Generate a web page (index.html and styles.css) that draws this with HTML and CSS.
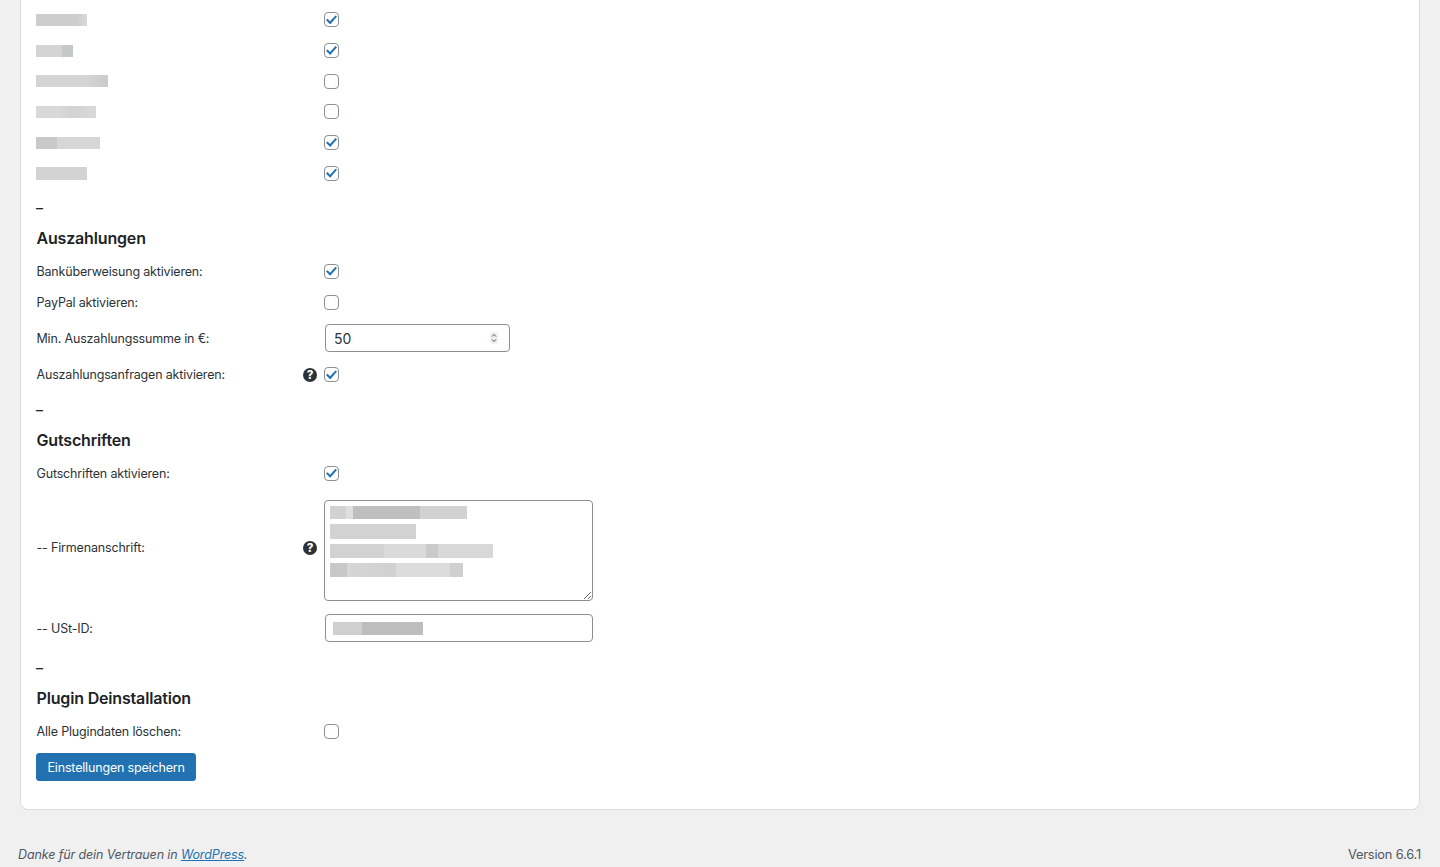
FILE: index.html
```html
<!DOCTYPE html>
<html lang="de">
<head>
    <meta charset="UTF-8">
    <title>Einstellungen</title>
    <link rel="stylesheet" href="styles.css">
</head>
<body>
    <form class="card">
        <div class="row"><div class="label"><span class="blur blur-a"></span></div><input type="checkbox" class="check" checked></div>
        <div class="row"><div class="label"><span class="blur blur-b"></span></div><input type="checkbox" class="check" checked></div>
        <div class="row"><div class="label"><span class="blur blur-c"></span></div><input type="checkbox" class="check"></div>
        <div class="row"><div class="label"><span class="blur blur-d"></span></div><input type="checkbox" class="check"></div>
        <div class="row"><div class="label"><span class="blur blur-e"></span></div><input type="checkbox" class="check" checked></div>
        <div class="row"><div class="label"><span class="blur blur-f"></span></div><input type="checkbox" class="check" checked></div>

        <p class="dash">–</p>
        <h2>Auszahlungen</h2>
        <div class="row"><label class="label">Banküberweisung aktivieren:</label><input type="checkbox" class="check" checked></div>
        <div class="row"><label class="label">PayPal aktivieren:</label><input type="checkbox" class="check"></div>
        <div class="row row-number">
            <label class="label">Min. Auszahlungssumme in €:</label>
            <div class="number-wrap">
                <input type="text" class="field field-number" value="50">
                <svg class="spinner" width="8" height="12" viewBox="0 0 8 12"><path d="M2 4.6 4 2.4 6 4.6M2 7.4 4 9.6 6 7.4" fill="none" stroke="#50575e" stroke-width="1"/></svg>
            </div>
        </div>
        <div class="row row-help"><label class="label">Auszahlungsanfragen aktivieren:<span class="help">?</span></label><input type="checkbox" class="check" checked></div>

        <p class="dash">–</p>
        <h2>Gutschriften</h2>
        <div class="row"><label class="label">Gutschriften aktivieren:</label><input type="checkbox" class="check" checked></div>
        <div class="row row-area">
            <label class="label">-- Firmenanschrift:<span class="help">?</span></label>
            <div class="area-wrap">
                <textarea class="area"></textarea>
                <div class="area-lines">
                    <span class="blur line-a"></span>
                    <span class="blur line-b"></span>
                    <span class="blur line-c"></span>
                    <span class="blur line-d"></span>
                </div>
            </div>
        </div>
        <div class="row row-field">
            <label class="label">-- USt-ID:</label>
            <div class="text-wrap">
                <input type="text" class="field field-text">
                <span class="blur line-e"></span>
            </div>
        </div>

        <p class="dash">–</p>
        <h2>Plugin Deinstallation</h2>
        <div class="row"><label class="label">Alle Plugindaten löschen:</label><input type="checkbox" class="check"></div>
        <button type="button" class="save">Einstellungen speichern</button>
    </form>

    <footer class="footer">
        <span class="thanks">Danke für dein Vertrauen in <a href="#">WordPress</a>.</span>
        <span class="version">Version 6.6.1</span>
    </footer>
</body>
</html>
```

FILE: styles.css
```css
html, body {
    margin: 0;
    height: 867px;
    overflow: hidden;
}

body {
    background: #f0f0f1;
    color: #2c3338;
    font-family: Inter, "Noto Sans", sans-serif;
    font-size: 12.5px;
    letter-spacing: -0.17px;
    line-height: 18px;
}

/* Einstellungen */
.card {
    box-sizing: border-box;
    height: 810px;
    margin: 0 20px;
    padding: 4.6px 15px 0;
    background: #fff;
    border: 1px solid #dcdcde;
    border-top: 0;
    border-radius: 0 0 8px 8px;
}

.row {
    display: flex;
    align-items: center;
    height: 30.67px;
}

.row-field {
    height: 41px;
}

.row-number {
    height: 42px;
}

.row-help {
    height: 31.17px;
}

.row-area {
    align-items: flex-start;
    height: 119px;
    padding-top: 11.7px;
    box-sizing: border-box;
}

.row-area .label {
    height: 95px;
}

.label {
    display: flex;
    align-items: center;
    justify-content: space-between;
    box-sizing: border-box;
    width: 288px;
    padding-right: 7px;
    flex-shrink: 0;
}

label.label {
    padding-left: 0.5px;
    padding-top: 2px;
}

.row-help label.label, .row-area label.label {
    padding-top: 0;
}

.dash {
    margin: 0;
    padding-top: 10.5px;
    height: 19.5px;
    font-size: 14px;
    font-weight: 500;
    line-height: 18px;
    color: #1d2327;
}

h2 {
    margin: 0;
    padding-top: 7.5px;
    padding-left: 0.5px;
    height: 30px;
    font-size: 16px;
    font-weight: 600;
    letter-spacing: -0.17px;
    line-height: 24px;
    color: #1d2327;
}

.check {
    appearance: none;
    display: flex;
    align-items: center;
    justify-content: center;
    box-sizing: border-box;
    width: 15px;
    height: 15px;
    margin: 0;
    background: #fff;
    border: 1px solid #8c8f94;
    border-radius: 4px;
}

.check:checked::before {
    content: "";
    width: 11px;
    height: 9px;
    background: #2271b1;
    clip-path: polygon(0 52%, 14% 38%, 37% 66%, 86% 0, 100% 12%, 38% 100%);
}

.help {
    display: block;
    width: 14px;
    height: 14px;
    border-radius: 50%;
    background: #2c3338;
    color: #fff;
    font-size: 11.5px;
    font-weight: 800;
    letter-spacing: 0;
    line-height: 14px;
    text-align: center;
}

/* Eingabefelder */
.field {
    box-sizing: border-box;
    height: 28px;
    margin: 0;
    padding: 0 8px;
    background: #fff;
    border: 1px solid #8c8f94;
    border-radius: 4px;
    color: #2c3338;
    font: inherit;
    font-size: 14px;
    letter-spacing: 0;
}

.number-wrap, .text-wrap, .area-wrap {
    position: relative;
    display: flex;
}

.number-wrap, .text-wrap {
    margin-left: 1px;
}

.field-number {
    width: 185px;
}

.field-text {
    width: 267.5px;
}

.spinner {
    position: absolute;
    top: 8px;
    right: 12px;
    background: #f0f0f1;
    border-radius: 3px;
}

.area {
    box-sizing: border-box;
    display: block;
    width: 269px;
    height: 101px;
    margin: 0;
    background: #fff;
    border: 1px solid #8c8f94;
    border-radius: 4px;
}

.area-lines {
    position: absolute;
    top: 6px;
    left: 6px;
    display: flex;
    flex-direction: column;
    align-items: flex-start;
    gap: 5px;
}

/* verpixelte Inhalte */
.blur {
    display: block;
    height: 12px;
    background: #d6d6d6;
}

.blur-a { width: 51px; background: linear-gradient(90deg, #cdcdcd 80%, #d9d9d9); }
.blur-b { width: 37px; background: linear-gradient(90deg, #d4d4d4 70%, #c4c8c9 70%); }
.blur-c { width: 72px; background: linear-gradient(90deg, #d4d4d4 70%, #cbcbcb); }
.blur-d { width: 60px; background: linear-gradient(90deg, #d8d8d8 40%, #d2d2d2 60%, #d9d9d9); }
.blur-e { width: 64px; background: linear-gradient(90deg, #c8c8c8 33%, #d6d6d6 33%); }
.blur-f { width: 51px; height: 13px; background: #d3d3d3; }

.line-a { width: 137px; height: 13px; background: linear-gradient(90deg, #d2d2d2 12%, #dedede 12%, #dedede 17%, #bfbfbf 17%, #bfbfbf 66%, #d2d2d2 66%); }
.line-b { width: 86px; height: 15px; background: #d2d2d2; }
.line-c { width: 163px; height: 14px; background: linear-gradient(90deg, #d2d2d2 33%, #dadada 33%, #dadada 59%, #cacaca 59%, #cacaca 66%, #d8d8d8 66%); }
.line-d { width: 133px; height: 14px; background: linear-gradient(90deg, #c8c8c8 13%, #d6d6d6 13%, #d0d0d0 50%, #dcdcdc 50%, #dcdcdc 90%, #d0d0d0 90%); }
.line-e {
    position: absolute;
    top: 8px;
    left: 8px;
    width: 90px;
    height: 13px;
    background: linear-gradient(90deg, #cfcfcf 32%, #bdbdbd 32%);
}

.save {
    display: block;
    height: 28px;
    margin-top: 6.5px;
    padding: 2px 10.5px 0;
    background: #2271b1;
    border: 1px solid #2271b1;
    border-radius: 3px;
    color: #fff;
    font: inherit;
    letter-spacing: inherit;
}

/* Fussbereich */
.footer {
    display: flex;
    justify-content: space-between;
    margin: 36px 19px 0 18px;
    color: #50575e;
}

.thanks {
    font-style: italic;
    letter-spacing: -0.12px;
}

.version {
    font-size: 12.8px;
}

.footer a {
    color: #2271b1;
}
```
